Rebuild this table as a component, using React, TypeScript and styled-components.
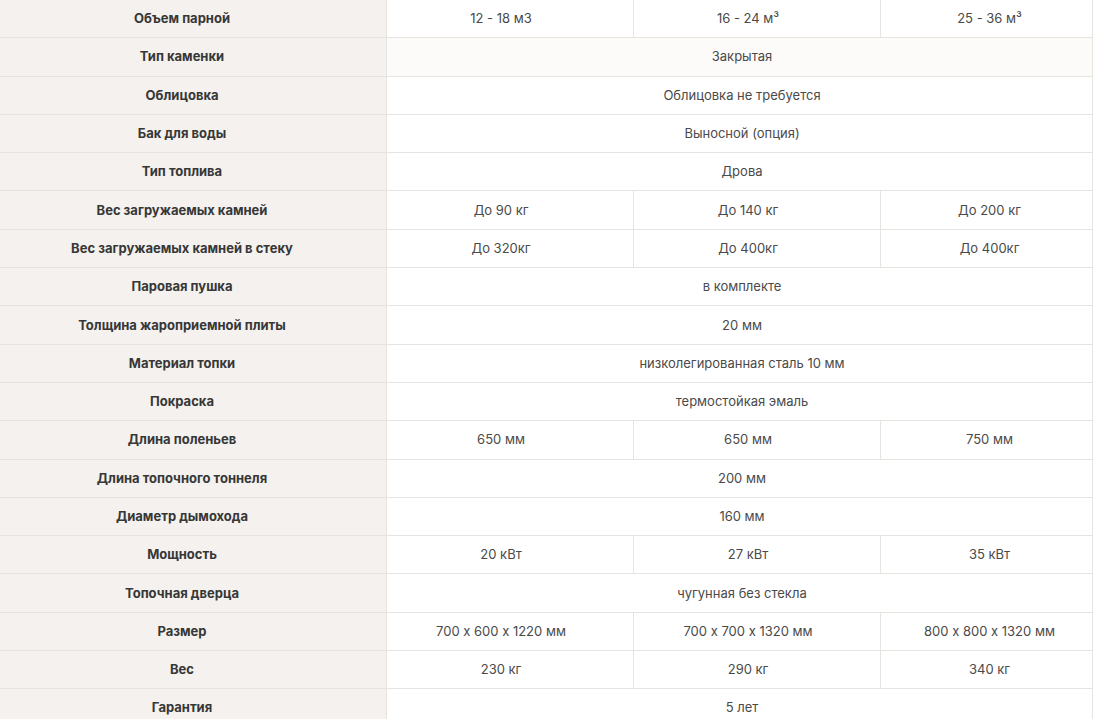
import React from "react";
import styled, { createGlobalStyle } from "styled-components";

const Global = createGlobalStyle`
  html, body { margin: 0; padding: 0; background: #ffffff; }
  body {
    font-family: Inter, "Open Sans", "Noto Sans", sans-serif;
    font-feature-settings: "calt" 0;
    overflow: hidden;
  }
`;

const Table = styled.div`
  width: 1093px;
  display: flex;
  flex-direction: column;
`;

const Row = styled.div`
  display: grid;
  grid-template-columns: 387px 247px 247px 212px;
  height: 38.3px;
  flex: none;
`;

const Cell = styled.div<{ $padL?: number; $padR?: number }>`
  box-sizing: border-box;
  display: flex;
  align-items: center;
  justify-content: center;
  border-bottom: 1px solid #e7e4e0;
  border-right: 1px solid #e7e4e0;
  padding-left: ${(p) => p.$padL ?? 0}px;
  padding-right: ${(p) => p.$padR ?? 0}px;
  padding-bottom: 1px;
  white-space: nowrap;
  font-feature-settings: "calt" 0;
`;

const LabelCell = styled(Cell)`
  background: #f4f1ee;
  color: #373737;
  font-weight: 700;
  font-size: 13px;
`;

const ValueCell = styled(Cell)<{ $span?: boolean; $tint?: boolean }>`
  grid-column: ${(p) => (p.$span ? "2 / 5" : "auto")};
  background: ${(p) => (p.$tint ? "#fcfbf9" : "#ffffff")};
  color: #4a4a4a;
  font-weight: 400;
  font-size: 13px;
`;

type Val = React.ReactNode;
type RowData = { label: string; values: Val[]; tint?: boolean };

const rows: RowData[] = [
  { label: "Объем парной", values: ["12 - 18 м3", "16 - 24 м³", "25 - 36 м³"] },
  { label: "Тип каменки", values: ["Закрытая"], tint: true },
  { label: "Облицовка", values: ["Облицовка не требуется"] },
  { label: "Бак для воды", values: ["Выносной (опция)"] },
  { label: "Тип топлива", values: ["Дрова"] },
  { label: "Вес загружаемых камней", values: ["До 90 кг", "До 140 кг", "До 200 кг"] },
  { label: "Вес загружаемых камней в стеку", values: ["До 320кг", "До 400кг", "До 400кг"] },
  { label: "Паровая пушка", values: ["в комплекте"] },
  { label: "Толщина жароприемной плиты", values: ["20 мм"] },
  { label: "Материал топки", values: ["низколегированная сталь 10 мм"] },
  { label: "Покраска", values: ["термостойкая эмаль"] },
  { label: "Длина поленьев", values: ["650 мм", "650 мм", "750 мм"] },
  { label: "Длина топочного тоннеля", values: ["200 мм"] },
  { label: "Диаметр дымохода", values: ["160 мм"] },
  { label: "Мощность", values: ["20 кВт", "27 кВт", "35 кВт"] },
  { label: "Топочная дверца", values: ["чугунная без стекла"] },
  { label: "Размер", values: ["700 x 600 x 1220 мм", "700 x 700 x 1320 мм", "800 x 800 x 1320 мм"] },
  { label: "Вес", values: ["230 кг", "290 кг", "340 кг"] },
  { label: "Гарантия", values: ["5 лет"] },
];

export default function App() {
  return (
    <>
      <Global />
      <Table>
        {rows.map((r) => (
          <Row key={r.label}>
            <LabelCell $padR={22}>{r.label}</LabelCell>
            {r.values.length === 1 ? (
              <ValueCell $span $tint={r.tint} $padL={5}>
                {r.values[0]}
              </ValueCell>
            ) : (
              r.values.map((v, i) => (
                <ValueCell key={i} $padR={i < 2 ? 18 : 0} $padL={i === 2 ? 6 : 0}>
                  {v}
                </ValueCell>
              ))
            )}
          </Row>
        ))}
      </Table>
    </>
  );
}
